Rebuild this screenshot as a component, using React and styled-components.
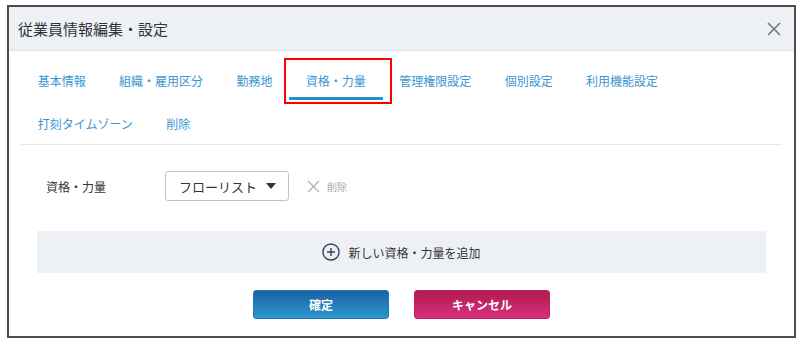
import styled, { createGlobalStyle } from "styled-components"

const GlobalStyle = createGlobalStyle`
  body {
    margin: 0;
    background: #fff;
    font-family: "Noto Sans CJK JP", "Noto Sans", sans-serif;
  }
`

const Frame = styled.div`
  box-sizing: border-box;
  margin: 5px 0 0 7px;
  width: 789px;
  height: 333px;
  border: 2px solid #4d4d4d;
  display: flex;
  flex-direction: column;
`
const Header = styled.div`
  height: 43px;
  background: #edf1f5;
  border-bottom: 1px solid #dbe2e8;
  display: flex;
  align-items: center;
  justify-content: space-between;
  padding: 0 12px 0 9px;
`
const Title = styled.span`
  font-size: 15px;
  color: #333;
`
const CloseBtn = styled.button`
  border: 0;
  background: none;
  padding: 0;
  width: 16px;
  height: 16px;
  display: flex;
  cursor: pointer;
`
const Body = styled.div`
  padding: 0 12px 0 12px;
  display: flex;
  flex-direction: column;
  flex: 1;
`
const Tabs = styled.div`
  display: flex;
  flex-wrap: wrap;
  row-gap: 3px;
  padding: 9px 0 1px 0;
  border-bottom: 1px solid #e3e8ed;
`
const Tab = styled.div`
  position: relative;
  box-sizing: border-box;
  height: 40px;
  padding: 3px 16.7px 0 16.7px;
  display: flex;
  align-items: center;
  font-size: 12px;
  color: #3a96d2;
  border-bottom: 3px solid ${(p) => (p.active ? "#2b8ccb" : "transparent")};
  cursor: pointer;
  ${(p) =>
    p.marked &&
    `
    &::after {
      content: "";
      position: absolute;
      top: -2px;
      left: -5px;
      right: -9px;
      bottom: -7px;
      border: 2.5px solid #f00;
    }
  `}
`
const FormRow = styled.div`
  display: flex;
  align-items: center;
  padding: 26px 0 0 25px;
`
const Label = styled.span`
  width: 119px;
  font-size: 12px;
  color: #333;
`
const Select = styled.div`
  box-sizing: border-box;
  width: 124px;
  height: 30px;
  border: 1px solid #b9c6d2;
  border-radius: 3px;
  display: flex;
  align-items: center;
  justify-content: space-between;
  padding: 0 12px 0 13px;
  font-size: 13px;
  color: #333;
`
const Remove = styled.span`
  display: flex;
  align-items: center;
  gap: 7px;
  margin-left: 18px;
  font-size: 10px;
  color: #a9a9a9;
`
const AddBar = styled.div`
  margin: 30px 16px 0 16px;
  height: 42px;
  background: #edf1f5;
  display: flex;
  align-items: center;
  justify-content: center;
  gap: 8px;
  font-size: 12px;
  color: #333;
`
const Buttons = styled.div`
  display: flex;
  justify-content: center;
  gap: 25px;
  margin-top: 17px;
`
const Button = styled.button`
  width: 136px;
  height: 29px;
  border: 1px solid ${(p) => (p.variant === "cancel" ? "#c22063" : "#2276b5")};
  border-radius: 3px;
  color: #fff;
  font-family: inherit;
  font-size: 12px;
  font-weight: 700;
  background: ${(p) =>
    p.variant === "cancel"
      ? "linear-gradient(#b01a4c, #d9307f)"
      : "linear-gradient(#1d61a7, #2b98ca)"};
  cursor: pointer;
`

const tabs = [
  "基本情報",
  "組織・雇用区分",
  "勤務地",
  "資格・力量",
  "管理権限設定",
  "個別設定",
  "利用機能設定",
  "打刻タイムゾーン",
  "削除",
]

function App() {
  return (
    <>
      <GlobalStyle />
      <Frame>
        <Header>
          <Title>従業員情報編集・設定</Title>
          <CloseBtn>
            <svg width="16" height="16" viewBox="0 0 16 16">
              <path d="M2 2L14 14M14 2L2 14" stroke="#6c7784" strokeWidth="1.6" />
            </svg>
          </CloseBtn>
        </Header>
        <Body>
          <Tabs>
            {tabs.map((t, i) => (
              <Tab key={i} active={i === 3} marked={i === 3}>
                {t}
              </Tab>
            ))}
          </Tabs>
          <FormRow>
            <Label>資格・力量</Label>
            <Select>
              フローリスト
              <svg width="10" height="6" viewBox="0 0 10 6">
                <path d="M0 0H10L5 6Z" fill="#333" />
              </svg>
            </Select>
            <Remove>
              <svg width="13" height="13" viewBox="0 0 13 13">
                <path d="M1 1L12 12M12 1L1 12" stroke="#b0b0b0" strokeWidth="1.2" />
              </svg>
              削除
            </Remove>
          </FormRow>
          <AddBar>
            <svg width="18" height="18" viewBox="0 0 18 18">
              <circle cx="9" cy="9" r="8" fill="none" stroke="#3a4350" strokeWidth="1.4" />
              <path d="M9 5V13M5 9H13" stroke="#3a4350" strokeWidth="1.4" />
            </svg>
            新しい資格・力量を追加
          </AddBar>
          <Buttons>
            <Button>確定</Button>
            <Button variant="cancel">キャンセル</Button>
          </Buttons>
        </Body>
      </Frame>
    </>
  )
}

export default App
